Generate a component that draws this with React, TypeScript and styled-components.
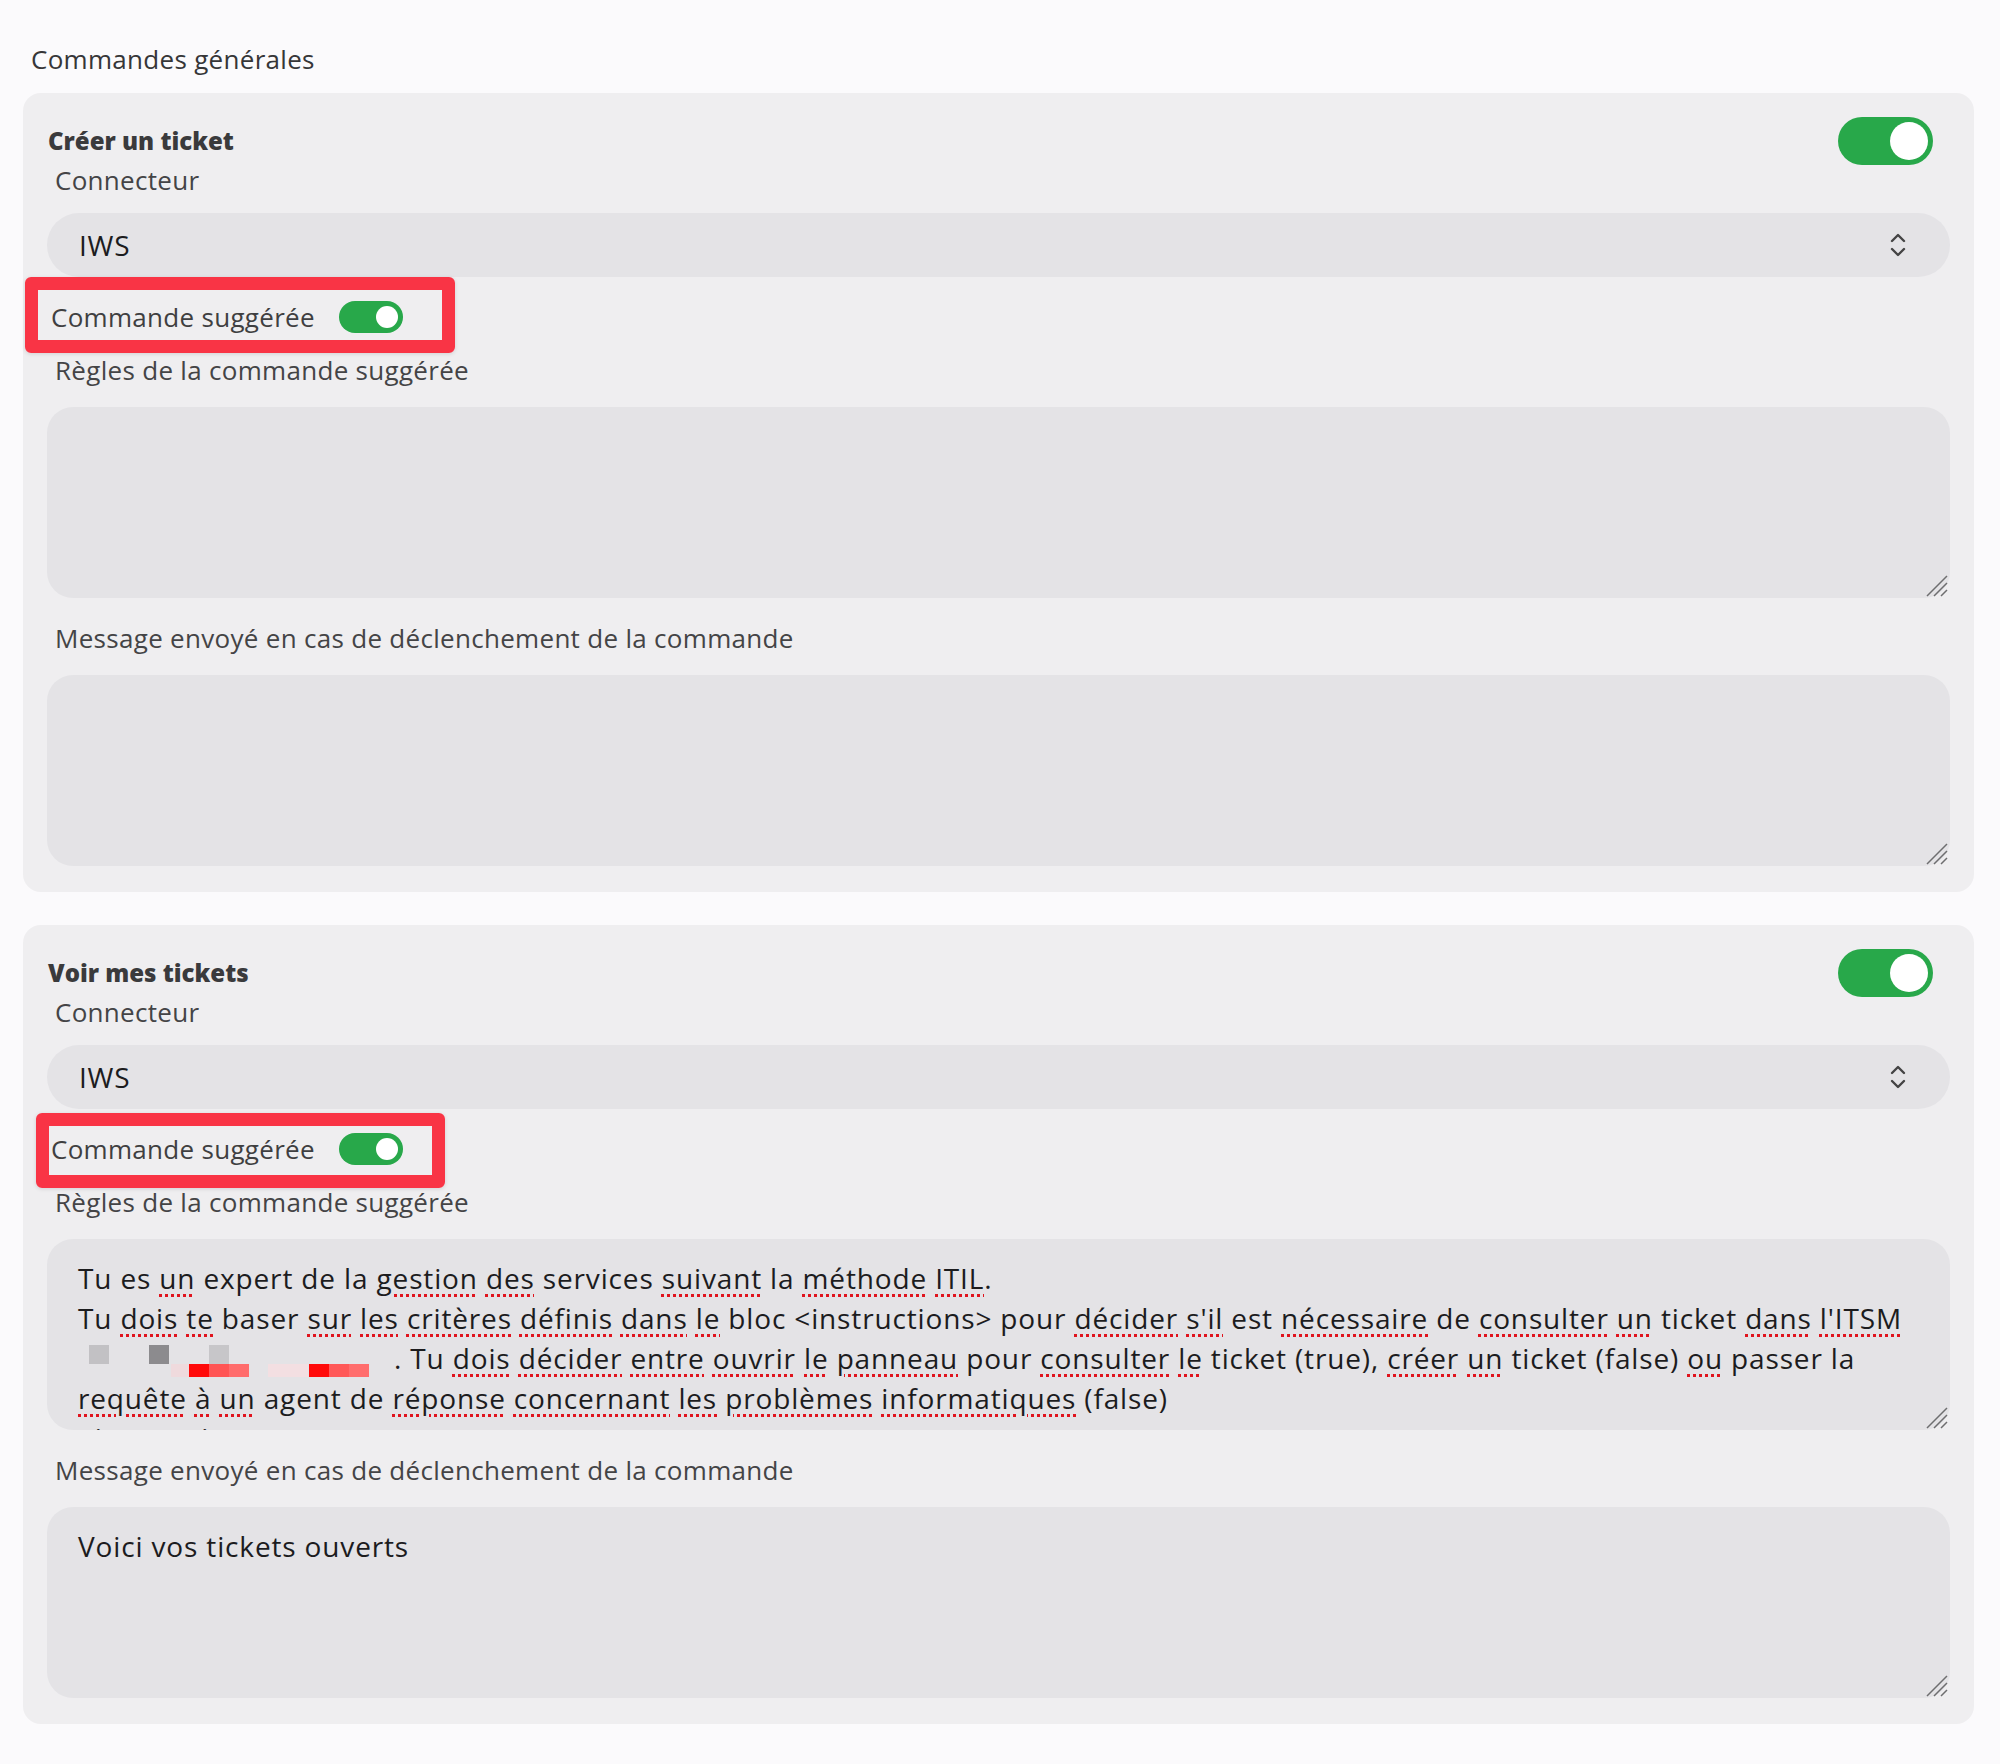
import styled, { createGlobalStyle } from "styled-components";

const GlobalStyle = createGlobalStyle`
  html, body {
    margin: 0;
    padding: 0;
    background: #fbfafc;
  }
  body {
    font-family: "Open Sans", "Noto Sans", sans-serif;
  }
`;

// ~mot~ = souligné par le correcteur orthographique
const RULES_LINES = [
  "Tu es ~un~ expert de la ~gestion~ ~des~ services ~suivant~ la ~méthode~ ~ITIL~.",
  "Tu ~dois~ ~te~ baser ~sur~ ~les~ ~critères~ ~définis~ ~dans~ ~le~ bloc <instructions> pour ~décider~ ~s'il~ est ~nécessaire~ de ~consulter~ ~un~ ticket ~dans~ ~l'ITSM~",
  "REDACTED. Tu ~dois~ ~décider~ ~entre~ ~ouvrir~ ~le~ ~panneau~ pour ~consulter~ ~le~ ticket (true), ~créer~ ~un~ ticket (false) ~ou~ passer la",
  "~requête~ ~à~ ~un~ agent de ~réponse~ ~concernant~ ~les~ ~problèmes~ ~informatiques~ (false)",
  "<instructions>",
];

interface ICommand {
  title: string;
  connector: string;
  rules: string[];
  message: string;
  box: { left: number; top: number; width: number; height: number };
}

const COMMANDS: ICommand[] = [
  {
    title: "Créer un ticket",
    connector: "IWS",
    rules: [],
    message: "",
    box: { left: -22, top: -24, width: 430, height: 76 },
  },
  {
    title: "Voir mes tickets",
    connector: "IWS",
    rules: RULES_LINES,
    message: "Voici vos tickets ouverts",
    box: { left: -11, top: -20, width: 409, height: 75 },
  },
];

function spell(line: string) {
  return line.split(/(~[^~]+~)/).map((part, i) => {
    if (part.startsWith("~")) {
      return <Misspelled key={i}>{part.slice(1, -1)}</Misspelled>;
    }
    if (part.startsWith("REDACTED")) {
      return (
        <span key={i}>
          <Redacted />
          {part.replace("REDACTED", "")}
        </span>
      );
    }
    return <span key={i}>{part}</span>;
  });
}

// bloc pixelisé (masquage d'une info sensible dans la capture)
function Redacted() {
  return (
    <RedactedSvg width="316" height="40" viewBox="0 0 316 40">
      <rect x="93" y="26" width="18" height="13" fill="#efdadd" />
      <rect x="190" y="26" width="40" height="13" fill="#f3dfe2" />
      <rect x="11" y="7" width="20" height="19" fill="#c2c1c4" />
      <rect x="71" y="7" width="20" height="19" fill="#8c8b8e" />
      <rect x="131" y="7" width="20" height="19" fill="#c7c6c9" />
      <rect x="111" y="26" width="20" height="13" fill="#ff0a0a" />
      <rect x="131" y="26" width="20" height="13" fill="#ff5454" />
      <rect x="151" y="26" width="20" height="13" fill="#ff6c6c" />
      <rect x="231" y="26" width="20" height="13" fill="#ff0a0a" />
      <rect x="251" y="26" width="20" height="13" fill="#ff5858" />
      <rect x="271" y="26" width="20" height="13" fill="#ff6d6d" />
    </RedactedSvg>
  );
}

function Grip() {
  return (
    <GripSvg width="22" height="22" viewBox="0 0 22 22">
      <path d="M1 21 L21 1 M8 21 L21 8 M15 21 L21 15" stroke="#6e6e70" strokeWidth="1.5" />
    </GripSvg>
  );
}

function CommandCard({ command }: { command: ICommand }) {
  return (
    <Card>
      <CardHeader>
        <CardTitle>{command.title}</CardTitle>
        <Toggle $size="lg" />
      </CardHeader>
      <Label>Connecteur</Label>
      <Select>
        <span>{command.connector}</span>
        <svg width="16" height="26" viewBox="0 0 16 26" fill="none">
          <path d="M2 9 L8 3 L14 9 M2 17 L8 23 L14 17" stroke="#444" strokeWidth="2.4" strokeLinecap="round" strokeLinejoin="round" />
        </svg>
      </Select>
      <SuggestRow>
        <SuggestLabel>Commande suggérée</SuggestLabel>
        <Toggle $size="sm" />
        <Highlight
          $left={command.box.left}
          $top={command.box.top}
          $width={command.box.width}
          $height={command.box.height}
        />
      </SuggestRow>
      <Label $gap={22}>Règles de la commande suggérée</Label>
      <Field>
        <RulesBox role="textbox">
          {command.rules.map((line, i) => (
            <RulesLine key={i}>{spell(line)}</RulesLine>
          ))}
        </RulesBox>
        <Grip />
      </Field>
      <Label $gap={25}>Message envoyé en cas de déclenchement de la commande</Label>
      <Field>
        <TextArea readOnly defaultValue={command.message} spellCheck={false} />
        <Grip />
      </Field>
    </Card>
  );
}

export default function App() {
  return (
    <>
      <GlobalStyle />
      <Page>
        <Heading>Commandes générales</Heading>
        {COMMANDS.map((c) => (
          <CommandCard key={c.title} command={c} />
        ))}
      </Page>
    </>
  );
}

const Page = styled.div`
  display: flex;
  flex-direction: column;
  padding: 44px 26px 39px 23px;
  min-height: 1764px;
  box-sizing: border-box;
`;

const Heading = styled.div`
  font-size: 26px;
  line-height: 30px;
  letter-spacing: 0.3px;
  color: #363638;
  padding-left: 8px;
  margin-bottom: 19px;
`;

const Card = styled.div`
  display: flex;
  flex-direction: column;
  background: #efeef0;
  border-radius: 18px;
  padding: 24px 24px 26px;

  & + & {
    margin-top: 33px;
  }
`;

const CardHeader = styled.div`
  display: flex;
  align-items: center;
  justify-content: space-between;
  height: 48px;
  padding: 0 17px 0 1px;
`;

const CardTitle = styled.span`
  font-size: 24px;
  font-weight: 800;
  color: #3a3a3c;
  margin-top: -2px;
`;

const Toggle = styled.span<{ $size: "lg" | "sm" }>`
  position: relative;
  display: inline-block;
  flex-shrink: 0;
  width: ${(p) => (p.$size === "lg" ? 95 : 64)}px;
  height: ${(p) => (p.$size === "lg" ? 48 : 32)}px;
  border-radius: 24px;
  background: #28a84a;

  &::after {
    content: "";
    position: absolute;
    top: 5px;
    right: 5px;
    width: ${(p) => (p.$size === "lg" ? 38 : 22)}px;
    height: ${(p) => (p.$size === "lg" ? 38 : 22)}px;
    border-radius: 50%;
    background: #ffffff;
  }
`;

const Label = styled.div<{ $gap?: number }>`
  font-size: 26px;
  line-height: 30px;
  letter-spacing: 0.3px;
  color: #444446;
  padding-left: 8px;
  margin-top: ${(p) => p.$gap ?? 0}px;
`;

const Select = styled.div`
  display: flex;
  align-items: center;
  justify-content: space-between;
  margin-top: 18px;
  height: 64px;
  border-radius: 32px;
  background: #e4e3e6;
  padding: 0 44px 0 32px;
  font-size: 28px;
  letter-spacing: 0.8px;
  color: #1c1c1e;
`;

const SuggestRow = styled.div`
  position: relative;
  display: flex;
  align-items: center;
  gap: 24px;
  align-self: flex-start;
  height: 32px;
  margin-top: 24px;
  padding-left: 4px;
`;

const SuggestLabel = styled.span`
  font-size: 26px;
  letter-spacing: 0.3px;
  color: #3f3f41;
`;

const Highlight = styled.div<{ $left: number; $top: number; $width: number; $height: number }>`
  position: absolute;
  left: ${(p) => p.$left}px;
  top: ${(p) => p.$top}px;
  width: ${(p) => p.$width}px;
  height: ${(p) => p.$height}px;
  box-sizing: border-box;
  border: 13px solid #f93445;
  border-radius: 6px;
  box-shadow: 0 1px 4px rgba(0, 0, 0, 0.12);
  pointer-events: none;
`;

const Field = styled.div`
  position: relative;
  margin-top: 22px;
`;

const boxStyles = `
  display: block;
  width: 100%;
  height: 191px;
  box-sizing: border-box;
  border: none;
  border-radius: 26px;
  background: #e4e3e6;
  padding: 19px 31px;
  font-family: "Open Sans", "Noto Sans", sans-serif;
  font-size: 28px;
  line-height: 40px;
  letter-spacing: 0.85px;
  color: #1c1c1e;
  resize: none;
  outline: none;
  overflow: hidden;
`;

const TextArea = styled.textarea`
  ${boxStyles}
`;

const RulesBox = styled.div`
  ${boxStyles}
  padding-bottom: 0;
`;

const RulesLine = styled.div`
  white-space: nowrap;
`;

const Misspelled = styled.span`
  text-decoration: underline dotted #e0141e;
  text-decoration-thickness: 3px;
  text-underline-offset: 5px;
`;

const RedactedSvg = styled.svg`
  display: inline-block;
  vertical-align: top;
`;

const GripSvg = styled.svg`
  position: absolute;
  right: 2px;
  bottom: 1px;
`;
